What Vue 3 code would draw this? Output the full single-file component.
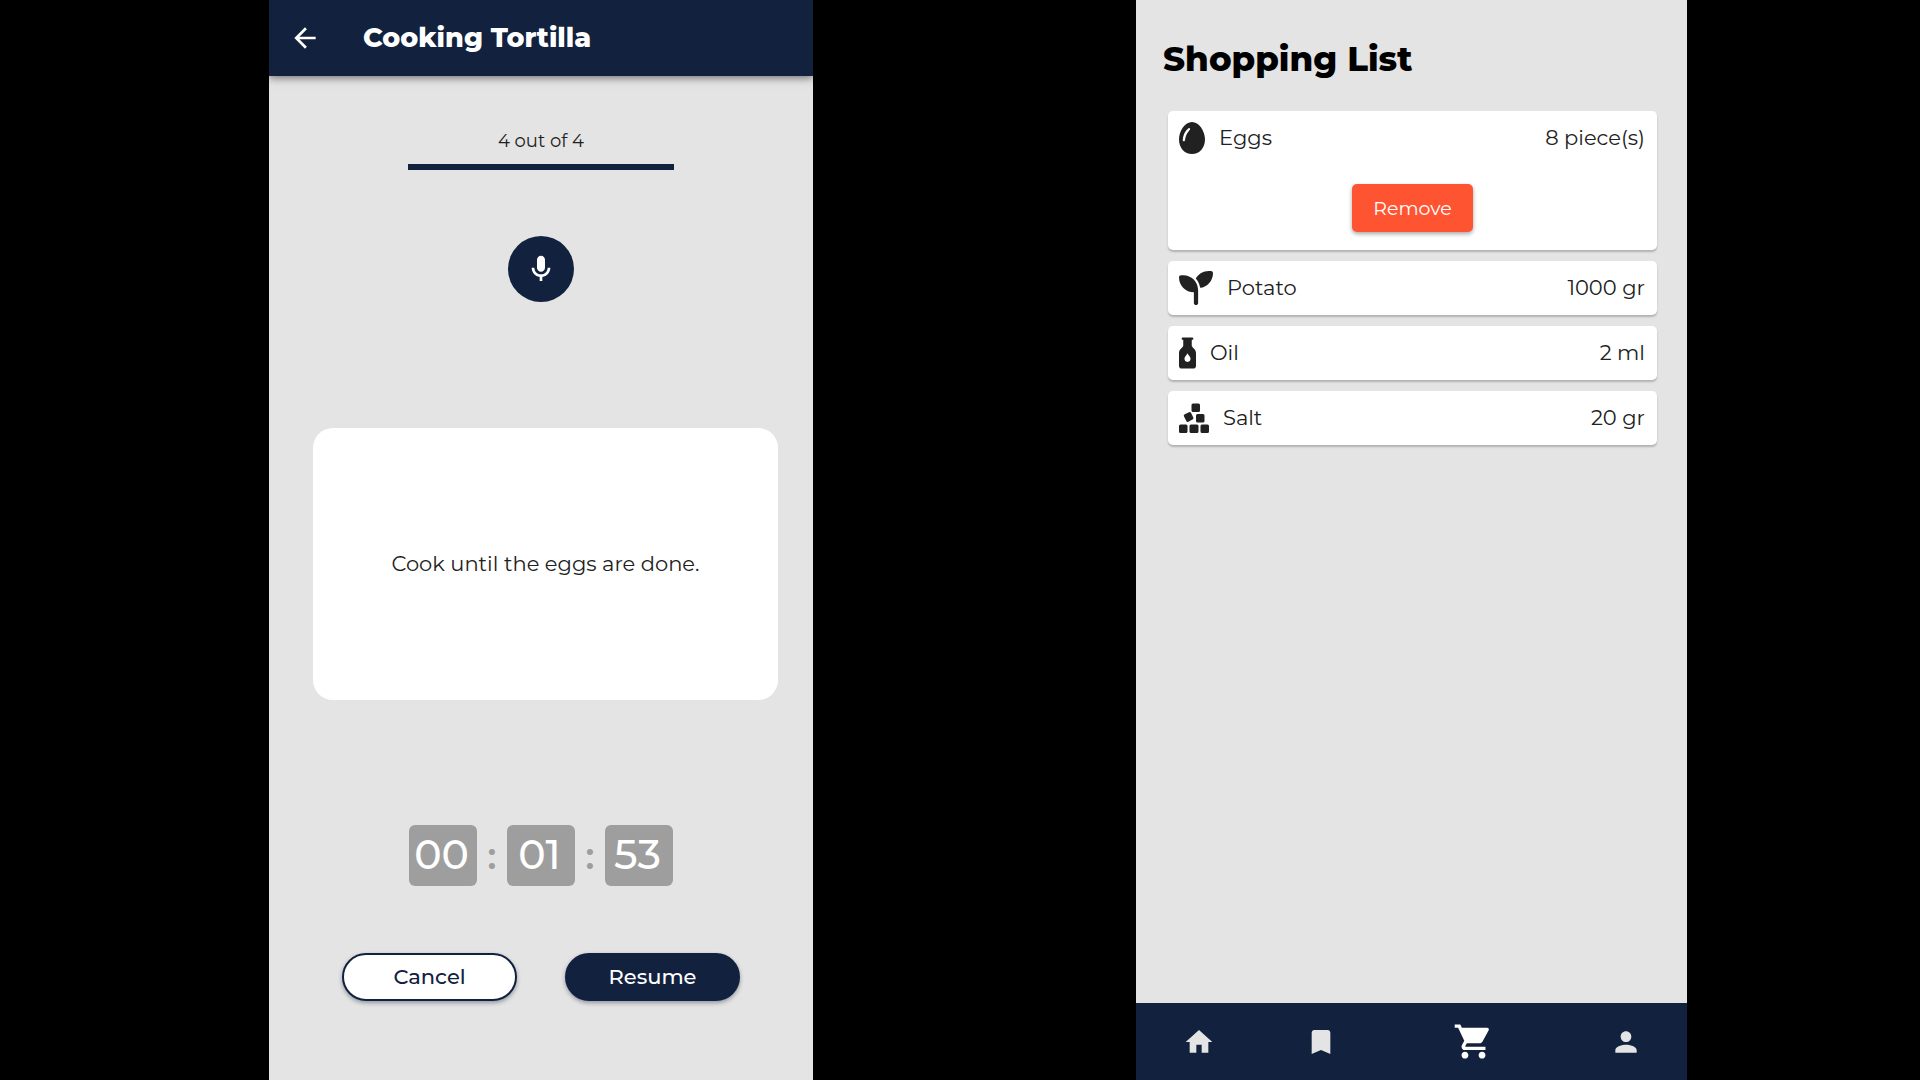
<template>
  <div class="showcase">
    <!-- Cooking screen -->
    <section class="phone cooking">
      <header class="app-bar">
        <button class="icon-button" type="button" aria-label="Back">
          <svg class="icon" viewBox="0 0 24 24"><path d="M20 11H7.83l5.59-5.59L12 4l-8 8 8 8 1.41-1.41L7.83 13H20v-2z" /></svg>
        </button>
        <h1>{{ recipe.title }}</h1>
      </header>

      <div class="progress">
        <p>{{ recipe.step }} out of {{ recipe.steps }}</p>
        <div class="track">
          <div class="bar" :style="{ width: progress + '%' }"></div>
        </div>
      </div>

      <button class="mic" type="button" aria-label="Voice control">
        <svg class="icon" viewBox="0 0 24 24"><path d="M12 14c1.66 0 3-1.34 3-3V5c0-1.66-1.34-3-3-3S9 3.34 9 5v6c0 1.66 1.34 3 3 3zM17 11c0 2.76-2.24 5-5 5s-5-2.24-5-5H5c0 3.53 2.61 6.43 6 6.92V21h2v-3.08c3.39-.49 6-3.39 6-6.92h-2z" /></svg>
      </button>

      <div class="instruction">
        <p>{{ recipe.instruction }}</p>
      </div>

      <div class="timer">
        <template v-for="(part, index) in timer" :key="index">
          <span v-if="index > 0" class="colon">:</span>
          <span class="digits">{{ part }}</span>
        </template>
      </div>

      <div class="actions">
        <button class="pill outlined" type="button">Cancel</button>
        <button class="pill" type="button">Resume</button>
      </div>
    </section>

    <!-- Shopping list screen -->
    <section class="phone shopping">
      <h2>Shopping List</h2>

      <ul class="items">
        <li v-for="item in items" :key="item.name" class="item">
          <div class="row" @click="toggle(item)">
            <svg class="food" :width="item.width" :height="item.height" :viewBox="item.viewBox">
              <path :d="item.path" fill-rule="evenodd" />
            </svg>
            <span class="name">{{ item.name }}</span>
            <span>{{ item.quantity }}</span>
          </div>
          <div v-if="selected === item.name" class="details">
            <button class="remove" type="button" @click="remove(item)">Remove</button>
          </div>
        </li>
      </ul>

      <nav class="bottom-nav">
        <a v-for="link in links" :key="link.label" href="#" :aria-label="link.label" :class="{ active: link.active }">
          <svg class="icon" viewBox="0 0 24 24"><path :d="link.path" /></svg>
        </a>
      </nav>
    </section>
  </div>
</template>

<script setup>
import { ref, computed } from 'vue'

const recipe = ref({
  title: 'Cooking Tortilla',
  step: 4,
  steps: 4,
  instruction: 'Cook until the eggs are done.'
})

const progress = computed(() => (recipe.value.step / recipe.value.steps) * 100)

const timer = ref(['00', '01', '53'])

const selected = ref('Eggs')

const items = ref([
  {
    name: 'Eggs',
    quantity: '8 piece(s)',
    width: 26,
    height: 32,
    viewBox: '0 0 26 32',
    path: 'M13 0C6 0 0 9 0 17.500C0 26 5.500 32 13 32S26 26 26 17.500C26 9 20 0 13 0zM9.500 6.200C10.500 5.500 11.700 6.700 10.800 7.800C8 11 6.500 14 6 18.200C5.800 19.800 3.700 19.600 3.700 18.100C4 13 6 9 9.500 6.200z'
  },
  {
    name: 'Potato',
    quantity: '1000 gr',
    width: 34,
    height: 34,
    viewBox: '0 0 512 512',
    path: 'M512 32c0 113.600-84.600 207.500-194.200 222c-7.100-53.400-30.600-101.600-65.300-139.300C290.800 46.300 364 0 448 0h32c17.700 0 32 14.300 32 32zM0 96C0 78.300 14.300 64 32 64H64c123.700 0 224 100.300 224 224v32V480c0 17.700-14.300 32-32 32s-32-14.300-32-32V320C100.300 320 0 219.700 0 96z'
  },
  {
    name: 'Oil',
    quantity: '2 ml',
    width: 17,
    height: 34,
    viewBox: '0 0 18 34',
    path: 'M4 0.500H14Q15.200 0.500 15.200 1.800T14 3.100H13.500V9.200C14 11.500 18 12.500 18 17V30.500Q18 33.500 15 33.500H3Q0 33.500 0 30.500V17C0 12.500 4 11.500 4.500 9.200V3.100H4Q2.800 3.100 2.800 1.800T4 0.500zM9 17.300C8 19.500 5.800 21 5.800 23.200A3.200 3.200 0 0 0 12.200 23.200C12.200 21 10 19.500 9 17.300z'
  },
  {
    name: 'Salt',
    quantity: '20 gr',
    width: 30,
    height: 30,
    viewBox: '0 0 30 30',
    path: 'M14 .500h5.500q1.500 0 1.500 1.500v5.500q0 1.500-1.500 1.500H14q-1.500 0-1.500-1.500V2q0-1.500 1.500-1.500zM18.500 11H24q1.500 0 1.500 1.500V18q0 1.500-1.500 1.500h-5.500q-1.500 0-1.500-1.500v-5.500q0-1.500 1.500-1.500zM5.800 11.200l4.200-2q1.400-.600 2.100.800l2.200 4.500q.600 1.400-.800 2.100l-4.100 2.200q-1.400.700-2.100-.700l-2.400-4.800q-.600-1.400.900-2.100zM1.500 21.500h5.500q1.500 0 1.500 1.500v5.500q0 1.500-1.500 1.500H1.500Q0 30 0 28.500V23q0-1.500 1.500-1.500zM12 21.500h6q1.500 0 1.500 1.500v5.500q0 1.500-1.500 1.500h-6q-1.500 0-1.500-1.500V23q0-1.500 1.500-1.500zM23 21.500h5.500q1.500 0 1.500 1.500v5.500q0 1.500-1.500 1.500H23q-1.500 0-1.500-1.500V23q0-1.500 1.500-1.500z'
  }
])

const links = [
  { label: 'Home', path: 'M10 20v-6h4v6h5v-8h3L12 3 2 12h3v8z' },
  { label: 'Saved recipes', path: 'M17 3H7c-1.100 0-1.990.900-1.990 2L5 21l7-3 7 3V5c0-1.100-.900-2-2-2z' },
  {
    label: 'Shopping list',
    active: true,
    path: 'M7 18c-1.100 0-1.990.900-1.990 2S5.900 22 7 22s2-.900 2-2-.900-2-2-2zM1 2v2h2l3.600 7.590-1.350 2.450c-.160.280-.250.610-.250.960 0 1.100.900 2 2 2h12v-2H7.420c-.140 0-.250-.110-.250-.250l.030-.120.900-1.630h7.450c.750 0 1.410-.410 1.750-1.030l3.580-6.490c.080-.140.120-.310.120-.480 0-.550-.450-1-1-1H5.210l-.940-2H1zm16 16c-1.100 0-1.990.900-1.990 2s.890 2 1.990 2 2-.900 2-2-.900-2-2-2z'
  },
  { label: 'Profile', path: 'M12 12c2.210 0 4-1.790 4-4s-1.790-4-4-4-4 1.790-4 4 1.790 4 4 4zm0 2c-2.670 0-8 1.340-8 4v2h16v-2c0-2.660-5.330-4-8-4z' }
]

function toggle(item) {
  selected.value = selected.value === item.name ? '' : item.name
}

function remove(item) {
  items.value = items.value.filter(i => i.name !== item.name)
}
</script>

<style>
body {
  margin: 0;
  background-color: #000;
}
</style>

<style scoped>
.showcase {
  display: grid;
  grid-template-columns: 269fr 544fr 323fr 551fr 233fr;
  min-height: 100vh;
  font-family: Montserrat, Inter, sans-serif;
  color: #212121;
}

.phone {
  display: flex;
  flex-direction: column;
  background-color: #e4e4e4;
}

h1,
h2,
p,
ul {
  margin: 0;
  padding: 0;
}

button {
  border: none;
  padding: 0;
  font-family: inherit;
  cursor: pointer;
}

.icon {
  display: block;
  width: 32px;
  height: 32px;
  fill: currentColor;
}

/* Cooking screen */
.cooking {
  grid-column: 2;
  align-items: center;
}

.app-bar {
  display: flex;
  align-items: center;
  align-self: stretch;
  gap: 42px;
  height: 76px;
  padding: 0 20px;
  background-color: #12213e;
  color: #fff;
  box-shadow: 0 2px 8px rgba(0, 0, 0, 0.5);
}

.icon-button {
  background: none;
  color: inherit;
}

h1 {
  font-size: 27px;
  line-height: 32px;
  font-weight: 800;
}

.progress {
  width: 49%;
  margin-top: 53px;
}

.progress p {
  font-size: 18px;
  line-height: 24px;
  text-align: center;
}

.track {
  margin-top: 11px;
  background-color: #c4c8d0;
}

.bar {
  height: 6px;
  background-color: #12213e;
}

.mic {
  display: flex;
  align-items: center;
  justify-content: center;
  width: 66px;
  height: 66px;
  margin-top: 66px;
  border-radius: 50%;
  background-color: #12213e;
  color: #fff;
}

.instruction {
  display: flex;
  align-items: center;
  justify-content: center;
  align-self: stretch;
  min-height: 272px;
  margin: 126px 35px 0 44px;
  border-radius: 20px;
  background-color: #fff;
}

.instruction p {
  font-size: 21px;
  line-height: 28px;
}

.timer {
  display: flex;
  align-items: center;
  margin-top: 125px;
}

.digits {
  box-sizing: border-box;
  width: 68px;
  padding: 0 3px 2px 0;
  border-radius: 6px;
  background-color: #9e9e9e;
  color: #fff;
  font-size: 41px;
  line-height: 59px;
  font-weight: 500;
  text-align: center;
}

.colon {
  width: 30px;
  padding-bottom: 4px;
  color: #9e9e9e;
  font-family: Lato, sans-serif;
  font-size: 40px;
  line-height: 56px;
  font-weight: 700;
  text-align: center;
}

.actions {
  display: flex;
  gap: 48px;
  margin-top: 67px;
}

.pill {
  width: 175px;
  height: 48px;
  border: 2px solid #12213e;
  border-radius: 24px;
  background-color: #12213e;
  color: #fff;
  font-size: 21px;
  line-height: 42px;
  font-weight: 500;
  box-shadow: 0 2px 4px rgba(18, 33, 62, 0.4);
}

.pill.outlined {
  background-color: #fff;
  color: #12213e;
}

/* Shopping list screen */
.shopping {
  grid-column: 4;
}

h2 {
  padding: 39px 27px 32px;
  color: #000;
  font-size: 34px;
  line-height: 40px;
  font-weight: 800;
}

.items {
  display: flex;
  flex-direction: column;
  gap: 11px;
  padding: 0 30px 0 32px;
  list-style: none;
}

.item {
  border-radius: 5px;
  background-color: #fff;
  box-shadow: 0 2px 2px rgba(0, 0, 0, 0.22);
}

.row {
  display: flex;
  align-items: center;
  gap: 14px;
  height: 54px;
  padding: 0 12px 0 11px;
  font-size: 21px;
  line-height: 28px;
}

.food {
  fill: #212121;
}

.name {
  flex: 1;
}

.details {
  display: flex;
  justify-content: center;
  padding: 19px 0 18px;
}

.remove {
  width: 121px;
  height: 48px;
  border-radius: 5px;
  background-color: #ff5432;
  color: #fff;
  font-size: 19px;
  box-shadow: 0 2px 4px rgba(0, 0, 0, 0.35);
}

.bottom-nav {
  display: flex;
  height: 77px;
  margin-top: auto;
  padding-left: 2px;
  background-color: #12213e;
}

.bottom-nav a {
  display: flex;
  flex: 2;
  align-items: center;
  justify-content: center;
  color: #e4e4e4;
}

.bottom-nav a.active {
  flex: 3;
  color: #fff;
}

.active .icon {
  width: 41px;
  height: 41px;
}
</style>
